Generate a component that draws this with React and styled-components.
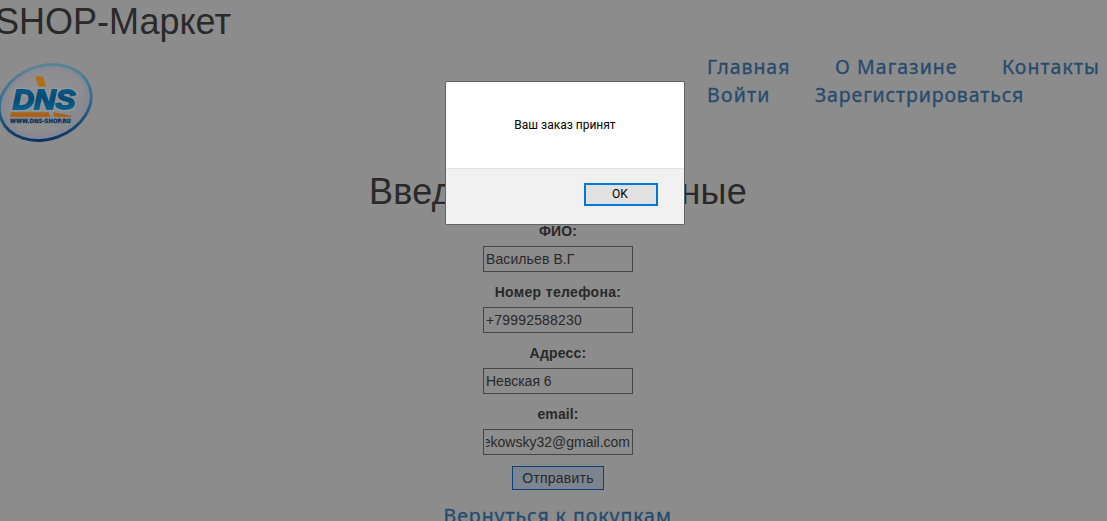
import React from 'react';
import styled, { createGlobalStyle } from 'styled-components';

const Global = createGlobalStyle`
  * { box-sizing: border-box; }
  html, body { margin: 0; height: 521px; overflow: hidden; background: #8c8c8c; }
  body { font: 14px/20px "Liberation Sans", Arial, sans-serif; color: #292929; }
`;

const Page = styled.div`
  position: relative;
  width: 1107px;
  height: 521px;
  overflow: hidden;
`;

const Title = styled.h1`
  margin: 0 0 0 -5px;
  height: 60px;
  padding-top: 2px;
  font-size: 36px;
  font-weight: 400;
  line-height: 40px;
  white-space: nowrap;
`;

const Header = styled.header`
  display: flex;
  justify-content: space-between;
  align-items: flex-start;
  height: 111px;
  margin-top: -7px;
`;

const Logo = styled.svg`
  display: block;
  width: 96px;
  height: 84px;
  margin-top: 8px;
`;

const Nav = styled.nav`
  width: 400px;
`;

const NavRow = styled.div`
  display: flex;
  gap: 45px;
  height: 28px;
`;

const Link = styled.a`
  display: block;
  flex: none;
  width: ${(p) => p.$width}px;
  font-family: "Comic Sans MS", "Noto Sans", sans-serif;
  font-size: 19.5px;
  line-height: 28px;
  letter-spacing: ${(p) => p.$spacing || 0.95}px;
  white-space: nowrap;
  color: #264b6d;
  -webkit-text-stroke: 0.3px #264b6d;
`;

const Order = styled.main`
  display: flex;
  flex-direction: column;
  align-items: center;
  margin-left: 9px;
`;

const Heading = styled.h2`
  margin: 8px 0 9px;
  font-size: 36px;
  font-weight: 400;
  line-height: 40px;
  letter-spacing: 0.22px;
  white-space: nowrap;
`;

const Field = styled.label`
  display: flex;
  flex-direction: column;
  align-items: center;
  height: 61px;
  font-weight: 700;
`;

const Caption = styled.span`
  letter-spacing: ${(p) => p.$spacing}px;
`;

const Input = styled.input`
  width: 150px;
  height: 26px;
  margin-top: 5px;
  padding: 1px 2px;
  border: 1px solid #464646;
  border-radius: 0;
  outline: 0;
  background: #8c8c8c;
  color: #292929;
  font: 14px/20px "Liberation Sans", Arial, sans-serif;
  letter-spacing: ${(p) => p.$spacing}px;
  direction: ${(p) => (p.$end ? 'rtl' : 'ltr')};
`;

const Submit = styled.button`
  width: 92px;
  height: 24px;
  margin: 1px 0 12px;
  padding: 0;
  border: 1px solid #07437a;
  background: #7c848f;
  color: #292929;
  font: 14px/20px "Liberation Sans", Arial, sans-serif;
  letter-spacing: 0.25px;
`;

const Dialog = styled.div`
  position: absolute;
  left: 445px;
  top: 81px;
  width: 240px;
  height: 144px;
  display: flex;
  flex-direction: column;
  overflow: hidden;
  border: 1px solid #626262;
  border-radius: 2px;
  background: #fff;
  color: #000;
  font: 12px/16px Roboto, sans-serif;
`;

const Message = styled.div`
  display: flex;
  align-items: center;
  justify-content: center;
  height: 86px;
`;

const Actions = styled.div`
  display: flex;
  flex: 1;
  justify-content: flex-end;
  padding: 14px 26px;
  border-top: 1px solid #e3e3e3;
  background: #f1f1f1;
`;

const OkButton = styled.button`
  width: 74px;
  height: 23px;
  padding: 0 2px 1px 0;
  border: 2px solid #0078d7;
  background: #e1e1e1;
  color: #000;
  font: 12px/16px Roboto, sans-serif;
`;

const fields = [
  { label: 'ФИО:', value: 'Васильев В.Г', spacing: 0.1, inputSpacing: 0.1 },
  { label: 'Номер телефона:', value: '+79992588230', spacing: 0.33, inputSpacing: 0.17 },
  { label: 'Адресс:', value: 'Невская 6', spacing: 0.2, inputSpacing: 0 },
  { label: 'email:', value: 'ekowsky32@gmail.com', spacing: 0.1, inputSpacing: 0, end: true },
];

function DnsLogo() {
  return (
    <Logo viewBox="0 0 96 84">
      <defs>
        <radialGradient id="face" cx=".5" cy=".48" r=".55">
          <stop offset="0" stopColor="#929292" />
          <stop offset=".75" stopColor="#8d8d90" />
          <stop offset="1" stopColor="#7a8090" />
        </radialGradient>
        <linearGradient id="rim" x1=".7" y1="0" x2=".3" y2="1">
          <stop offset="0" stopColor="#5d8797" />
          <stop offset=".5" stopColor="#346b8d" />
          <stop offset="1" stopColor="#082f5c" />
        </linearGradient>
        <linearGradient id="ink" x1="0" y1="0" x2="0" y2="1">
          <stop offset="0" stopColor="#086090" />
          <stop offset=".5" stopColor="#064a78" />
          <stop offset="1" stopColor="#087096" />
        </linearGradient>
      </defs>
      <ellipse cx="45.2" cy="41.5" rx="47" ry="36.6" transform="rotate(-20 45.2 41.5)" fill="url(#face)" stroke="url(#rim)" strokeWidth="3" />
      <ellipse cx="45.2" cy="41.3" rx="44.4" ry="34" transform="rotate(-20 45.2 41.3)" fill="none" stroke="#858898" strokeWidth="1.6" />
      <path d="M5 43Q8 35 18 33L79 35Q85 37 87 41Q78 60 58 66Q25 64 5 51Z" fill="#7f8995" opacity=".2" />
      <path d="M35.5 15.5h7.5l3 10h-7.5z" fill="#b06f14" />
      <text x="12.5" y="48" textLength="63" lengthAdjust="spacingAndGlyphs" fontFamily="Liberation Sans, Arial, sans-serif" fontSize="28.5" fontWeight="700" fontStyle="italic" fill="#989898" stroke="#989898" strokeWidth="4.5">DNS</text>
      <text x="12.5" y="48" textLength="63" lengthAdjust="spacingAndGlyphs" fontFamily="Liberation Sans, Arial, sans-serif" fontSize="28.5" fontWeight="700" fontStyle="italic" fill="url(#ink)" stroke="url(#ink)" strokeWidth="1.8">DNS</text>
      <path d="M11 51.2h38l1 4.8H10z" fill="#a8621b" />
      <path d="M53 51.2q11 1 21 4.8H54z" fill="#a8621b" />
      <text x="10" y="62.3" textLength="61" lengthAdjust="spacingAndGlyphs" fontFamily="DejaVu Sans, sans-serif" fontSize="5.8" fontWeight="700" fill="#082f56" stroke="#082f56" strokeWidth=".25">WWW.DNS-SHOP.RU</text>
    </Logo>
  );
}

export default function App() {
  return (
    <>
      <Global />
      <Page>
        <Title>SHOP-Маркет</Title>
        <Header>
          <DnsLogo />
          <Nav>
            <NavRow>
              <Link $width={83}>Главная</Link>
              <Link $width={122} $spacing={1.05}>О Магазине</Link>
              <Link $width={98} $spacing={1.05}>Контакты</Link>
            </NavRow>
            <NavRow>
              <Link $width={63} $spacing={1.2}>Войти</Link>
              <Link $width={210} $spacing={0.87}>Зарегистрироваться</Link>
            </NavRow>
          </Nav>
        </Header>
        <Order>
          <Heading>Введите ваши данные</Heading>
          {fields.map((field) => (
            <Field key={field.label}>
              <Caption $spacing={field.spacing}>{field.label}</Caption>
              <Input defaultValue={field.value} $spacing={field.inputSpacing} $end={field.end} />
            </Field>
          ))}
          <Submit>Отправить</Submit>
          <Link $width={229}>Вернуться к покупкам</Link>
        </Order>
        <Dialog role="dialog">
          <Message>Ваш заказ принят</Message>
          <Actions>
            <OkButton>OK</OkButton>
          </Actions>
        </Dialog>
      </Page>
    </>
  );
}
